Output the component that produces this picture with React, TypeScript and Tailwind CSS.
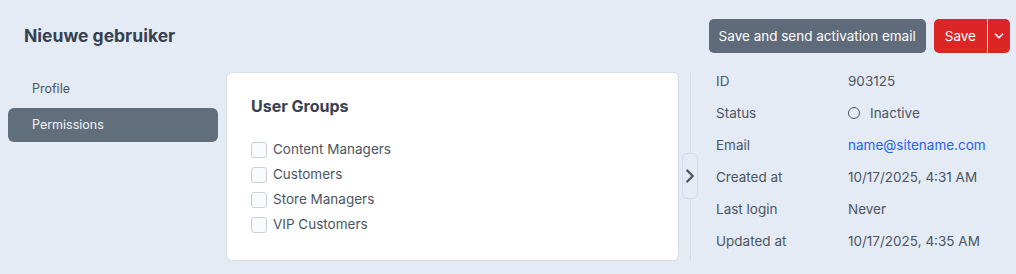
import { ChevronDown, ChevronRight } from "lucide-react";

const groups = ["Content Managers", "Customers", "Store Managers", "VIP Customers"];

const details: { label: string; value: string; kind?: "status" | "link" }[] = [
  { label: "ID", value: "903125" },
  { label: "Status", value: "Inactive", kind: "status" },
  { label: "Email", value: "name@sitename.com", kind: "link" },
  { label: "Created at", value: "10/17/2025, 4:31 AM" },
  { label: "Last login", value: "Never" },
  { label: "Updated at", value: "10/17/2025, 4:35 AM" },
];

export default function App() {
  return (
    <div
      className="h-[274px] w-[1016px] overflow-hidden bg-[#e4ebf5] text-[#4b5563]"
      style={{ fontFamily: "Inter, 'Noto Sans', sans-serif" }}
    >
      <div className="flex h-[70px] items-start justify-between pl-6 pr-[6px] pt-[19px]">
        <h1 className="flex h-[34px] items-center text-[17.5px] font-bold text-[#374151]">Nieuwe gebruiker</h1>
        <div className="flex gap-2">
          <button className="h-[34px] rounded-[5px] bg-[#5f6b7a] px-[10px] text-[13.5px] text-white">
            Save and send activation email
          </button>
          <div className="flex h-[34px] overflow-hidden rounded-[5px] bg-[#dc2626] text-white">
            <button className="px-[11px] text-[13.5px]">Save</button>
            <div className="w-px bg-white/90" />
            <button className="flex w-[22px] items-center justify-center">
              <ChevronDown size={14} strokeWidth={3} />
            </button>
          </div>
        </div>
      </div>

      <div className="flex items-start">
        <nav className="ml-2 mt-[2px] flex w-[210px] flex-col gap-[2px] text-[12.5px]">
          <div className="flex h-[34px] items-center rounded-md px-6 text-[#4b5563]">Profile</div>
          <div className="flex h-[34px] items-center rounded-md bg-[#616e7c] px-6 text-[#f1f5f9]">Permissions</div>
        </nav>

        <section className="ml-2 mt-[2px] h-[189px] w-[453px] rounded-md border border-[#d6dee9] bg-white px-6 pt-[21px]">
          <h2 className="text-base font-bold leading-6 text-[#374151]">User Groups</h2>
          <div className="mt-[19px] flex flex-col">
            {groups.map((g) => (
              <label key={g} className="flex h-[25px] items-center gap-[6px] text-[13.5px] text-[#4b5563]">
                <span className="h-4 w-4 rounded-[3px] border border-[#c9d1dc] bg-[#f8fafc]" />
                {g}
              </label>
            ))}
          </div>
        </section>

        <aside className="relative ml-[11px] mt-[2px] h-[189px] border-l border-[#d3dbe6] pl-[25px]">
          <button className="absolute left-[-9px] top-[81px] flex h-[46px] w-[16px] items-center justify-center overflow-visible rounded-[5px] border border-[#d3dbe6] bg-[#e4ebf5] text-[#4b5563]">
            <ChevronRight size={22} strokeWidth={2.6} className="shrink-0" />
          </button>
          <dl className="-mt-px flex flex-col gap-3 text-[13.5px] leading-5">
            {details.map((d) => (
              <div key={d.label} className="flex">
                <dt className="w-[132px] text-[#4b5563]">{d.label}</dt>
                <dd className="flex items-center">
                  {d.kind === "status" ? (
                    <>
                      <span className="mr-[10px] h-[12px] w-[12px] rounded-full border-[1.5px] border-[#4b5563]" />
                      <span>{d.value}</span>
                    </>
                  ) : d.kind === "link" ? (
                    <span className="text-[#2563eb]">{d.value}</span>
                  ) : (
                    d.value
                  )}
                </dd>
              </div>
            ))}
          </dl>
        </aside>
      </div>
    </div>
  );
}
